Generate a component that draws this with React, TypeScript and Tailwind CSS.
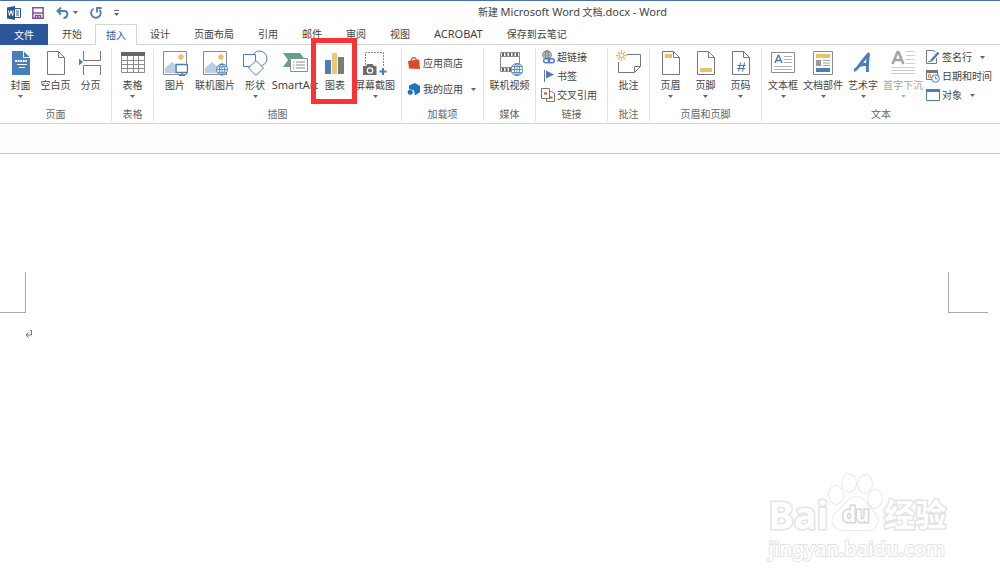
import type { ReactNode } from "react";
import clsx from "clsx";

const BLUE = "#4a7ebb";
const GRAY = "#777";

function Caret({ muted }: { muted?: boolean }) {
  return (
    <svg width="5" height="3" viewBox="0 0 5 3" className="shrink-0">
      <path d="M0 0h5L2.5 3z" fill={muted ? "#b8b8b8" : "#666"} />
    </svg>
  );
}

function Icon({ children }: { children: ReactNode }) {
  return (
    <svg width="26" height="26" viewBox="0 0 26 26" fill="none" stroke={GRAY} className="shrink-0">
      {children}
    </svg>
  );
}

function SmallIcon({ children }: { children: ReactNode }) {
  return (
    <svg width="14" height="14" viewBox="0 0 14 14" fill="none" stroke={GRAY} className="shrink-0">
      {children}
    </svg>
  );
}

function Sheet({ children }: { children?: ReactNode }) {
  return (
    <Icon>
      <path d="M4.500 1.500h11l6 6v17h-17zM15.500 1.500v6h6" fill="#fff" />
      {children}
    </Icon>
  );
}

function Globe({ x, y, r, color = BLUE }: { x: number; y: number; r: number; color?: string }) {
  return (
    <g stroke={color} transform={`translate(${x} ${y})`}>
      <circle r={r} fill="#fff" />
      <ellipse rx={r / 2.2} ry={r} />
      <path d={`M${-r} 0h${r * 2}M0 ${-r}v${r * 2}M${-r * 0.85} ${-r / 2}h${r * 1.7}M${-r * 0.85} ${r / 2}h${r * 1.7}`} strokeWidth="0.8" />
    </g>
  );
}

function Picture({ children }: { children: ReactNode }) {
  return (
    <Icon>
      <path d="M1.500 1.500h23v23h-23z" fill="#fff" stroke="#8a8a8a" />
      <path d="M3 23v-5l7-6 7 6v5z" fill="#b9cfe6" stroke="none" />
      <circle cx="19" cy="7" r="2.7" fill="#edc06c" stroke="none" />
      {children}
    </Icon>
  );
}

const coverIcon = (
  <Icon>
    <path d="M4 1h11v7h7v17H4z" fill={BLUE} stroke="none" />
    <path d="M16 1.500V7h5.500z" fill={BLUE} stroke="none" />
    <path d="M7 11h12" stroke="#fff" strokeWidth="2" strokeDasharray="2 .6" />
    <path d="M9 14.500h10M11 17.500h6" stroke="#fff" />
  </Icon>
);

const breakIcon = (
  <Icon>
    <path d="M5.500 1v9.500h17V1M5.500 25v-9.500h17V25" />
    <path d="M1 8.500l4 3.500-4 3.500z" fill={BLUE} stroke="none" />
  </Icon>
);

const tableIcon = (
  <Icon>
    <path d="M1.500 2.500h23v20h-23zM7.500 6v16M13.500 6v16M18.500 6v16M2 10.500h22M2 14.500h22M2 18.500h22" stroke="#8c8c8c" />
    <path d="M1 2h24v4H1z" fill="#666" stroke="none" />
  </Icon>
);

const pictureIcon = (
  <Picture>
    <path d="M13 13.500h13v9.500H13z" fill="#fff" stroke="none" />
    <path d="M14 14.500h11.500v8H14z" fill="#fff" stroke={BLUE} strokeWidth="1.500" />
    <path d="M17 25.500h6M20 23v2" stroke={BLUE} />
  </Picture>
);

const onlinePictureIcon = (
  <Picture>
    <Globe x={20} y={19.5} r={5.5} />
  </Picture>
);

const shapesIcon = (
  <Icon>
    <circle cx="17.500" cy="8.500" r="7.500" stroke={BLUE} />
    <path d="M1.500 4.500h12v12h-12z" fill="#fff" stroke={BLUE} />
    <path d="M14 10.500l7.500 7.500-7.500 7.500L6.500 18z" fill="#fff" stroke={BLUE} />
  </Icon>
);

const smartArtIcon = (
  <Icon>
    <path d="M1 3h17l5 7-5 7H1l5-7z" fill="#5fa389" stroke="none" />
    <path d="M8.500 8.500h17v13h-17z" fill="#fff" stroke="#8c8c8c" />
    <path d="M11 12h1.500M14 12h9M11 15h1.500M14 15h9M11 18h1.500M14 18h9" stroke="#8c8c8c" />
  </Icon>
);

const chartIcon = (
  <Icon>
    <path d="M3 10h6v14H3z" fill={BLUE} stroke="none" />
    <path d="M10 3h5v21h-5z" fill="#edc679" stroke="none" />
    <path d="M16 7h6v17h-6z" fill="#7a7a7a" stroke="none" />
  </Icon>
);

const screenshotIcon = (
  <Icon>
    <path d="M3.500 15V2.500h18V17" stroke="#8a8a8a" strokeDasharray="2 1" />
    <path d="M1 16h3l1.500-2h5l1.500 2h2.500v9H1z" fill="#6d6d6d" stroke="none" />
    <circle cx="8" cy="20.500" r="2.700" fill="#6d6d6d" stroke="#fff" strokeWidth="1.200" />
    <path d="M21 18v7M17.500 21.500h7" stroke={BLUE} strokeWidth="2" />
  </Icon>
);

const videoIcon = (
  <Icon>
    <path d="M3.500 2.500h19v19h-19zM3.500 6.500h19M3.500 17.500h19" stroke="#8c8c8c" />
    <path d="M5 4.500h17M5 19.500h10" stroke="#666" strokeWidth="3" strokeDasharray="2 1.500" />
    <Globe x={20} y={19.5} r={6} />
  </Icon>
);

const commentIcon = (
  <Icon>
    <path d="M2.500 12v10.500h16l6-6v-12H11M18.500 22.500v-6h6" />
    <path d="M5.500 0v11M0 5.500h11M1.800 1.800l7.400 7.400M9.200 1.800L1.800 9.200" stroke="#edb95a" strokeWidth="1.300" />
    <circle cx="5.500" cy="5.500" r="2.300" fill="#fff" stroke="#edb95a" />
  </Icon>
);

const textBoxIcon = (
  <Icon>
    <path d="M1.500 2.500h23v20h-23z" stroke="#8c8c8c" />
    <path d="M5 13L8.200 5.500h.6L12 13M6 10.500h5" stroke={BLUE} strokeWidth="1.500" />
    <path d="M14 6.500h8M14 9.500h8M14 12.500h8M4 16.500h18M4 19.500h18" stroke="#b0b0b0" />
  </Icon>
);

const quickPartsIcon = (
  <Icon>
    <path d="M3.500 1.500h19v23h-19z" stroke="#8c8c8c" />
    <path d="M6 4h14v4H6z" fill="#edc06c" stroke="none" />
    <path d="M6 10h5v6H6z" fill="#9a9a9a" stroke="none" />
    <path d="M13 10.500h7M13 13h7M13 15.500h7" stroke="#a5a5a5" />
    <path d="M6 18h14v4H6z" fill={BLUE} stroke="none" />
  </Icon>
);

const wordArtIcon = (
  <Icon>
    <path d="M4 20.500C8 19 11 12 18.500 4c-.8 6-1.500 11-1 18M9 15.500c3-.8 6-1.200 9-1.200" stroke={BLUE} strokeWidth="3" strokeLinejoin="round" />
  </Icon>
);

const dropCapIcon = (
  <Icon>
    <path d="M2.500 14L7.500 2h1l5 12M4.500 10h7" stroke="#a3a3a3" strokeWidth="2.500" />
    <path d="M16 1.500h9M16 5.500h9M16 9.500h9M16 13.500h9M1 17.500h24M1 20.500h24M1 23.500h24" stroke="#cfcfcf" />
  </Icon>
);

const storeIcon = (
  <SmallIcon>
    <path d="M1 5l11-1.500 1 9.500-11-.5z" fill="#dc4a1f" stroke="none" />
    <path d="M4 5.500C4 1 8.500 0 9.500 4.500" stroke="#dc4a1f" strokeWidth="1.200" />
  </SmallIcon>
);

const myAppsIcon = (
  <SmallIcon>
    <path d="M2 3.500L8 1l5 3v6l-5 3.500-1-5-5-1.500z" fill="#1e73be" stroke="none" />
    <circle cx="3.200" cy="10.200" r="2.500" fill="#1e73be" stroke="none" />
  </SmallIcon>
);

const linkIcon = (
  <SmallIcon>
    <Globe x={6} y={5} r={4.3} color="#777" />
    <path d="M2 8h12v6H2z" fill="#fff" stroke="none" />
    <rect x="2.700" y="8.700" width="6" height="4" rx="2" stroke={BLUE} strokeWidth="1.400" />
    <rect x="7.300" y="8.700" width="6" height="4" rx="2" stroke={BLUE} strokeWidth="1.400" />
  </SmallIcon>
);

const bookmarkIcon = (
  <SmallIcon>
    <path d="M3.500 1v12" />
    <path d="M5 1.500l8 4-8 4z" fill={BLUE} stroke="none" />
  </SmallIcon>
);

const crossRefIcon = (
  <SmallIcon>
    <path d="M.5.500h8v10h-8z" fill="#fff" />
    <path d="M8.500 3.500h2l3 2v8h-8v-3" />
    <path d="M3 5.500h3M8.500 9.500h3" stroke="#dc4a1f" strokeWidth="2" />
  </SmallIcon>
);

const signatureIcon = (
  <SmallIcon>
    <path d="M9.500 1.500l-3-1h-6v13h10V8" />
    <path d="M5 11l7.500-8.500" stroke={BLUE} strokeWidth="2.500" />
    <path d="M2 11.500h3" stroke="#777" />
  </SmallIcon>
);

const dateIcon = (
  <SmallIcon>
    <path d="M.5 1.500h11v9H.5z" />
    <path d="M0 1h12v3H0z" fill="#777" stroke="none" />
    <path d="M2.500 5.500h2v3h-2z" stroke="#e58a45" />
    <circle cx="9.500" cy="9.500" r="3.800" fill="#fff" stroke={BLUE} />
    <path d="M9.500 7.500v2.200h2" stroke={BLUE} />
  </SmallIcon>
);

const objectIcon = (
  <SmallIcon>
    <path d="M.5 1.500h13v11H.5z" stroke={BLUE} />
    <path d="M0 1h14v3H0z" fill={BLUE} stroke="none" />
  </SmallIcon>
);

type ToolProps = {
  icon: ReactNode;
  label: ReactNode;
  menu?: boolean;
  disabled?: boolean;
  marked?: boolean;
  wide?: boolean;
};

function Tool({ icon, label, menu, disabled, marked, wide }: ToolProps) {
  return (
    <button
      type="button"
      disabled={disabled}
      className={clsx(
        "relative flex flex-col items-center whitespace-nowrap pt-[5px] disabled:text-[#a3a3a3]",
        wide ? "w-10" : "w-[35px]",
      )}
    >
      {icon}
      <span className="mt-[2px] mb-[3px] leading-[14px]">{label}</span>
      {menu && <Caret muted={disabled} />}
      {marked && <span className="absolute -top-[7px] -left-1 z-10 h-[66px] w-[46px] border-5 border-[#fa3434]" />}
    </button>
  );
}

function SmallTool({ icon, label, menu }: ToolProps) {
  return (
    <button type="button" className="flex items-center gap-[2px] whitespace-nowrap leading-[14px]">
      {icon}
      {label}
      {menu && (
        <span className="ml-[6px]">
          <Caret />
        </span>
      )}
    </button>
  );
}

type GroupProps = { title: string; className: string; start?: boolean; last?: boolean; children: ReactNode };

function Group({ title, className, start, last, children }: GroupProps) {
  return (
    <section className={clsx("flex shrink-0 flex-col border-[#e1e1e1]", !last && "border-r", className)}>
      <div className={clsx("flex h-[60px]", start ? "justify-start pl-px" : "justify-center")}>
        {/* tools start above the divider line */}
        <div className="-mt-[3px] flex">{children}</div>
      </div>
      <h2 className="text-center leading-[14px] text-[#666]">{title}</h2>
    </section>
  );
}

const tabs = ["开始", "插入", "设计", "页面布局", "引用", "邮件", "审阅", "视图", "ACROBAT", "保存到云笔记"];

function TitleBar() {
  return (
    <header className="grid h-6 grid-cols-[145px_1fr] items-center border-t border-[#4a72ad]">
      <div className="flex items-center pl-[7px]">
        <svg width="14" height="14" viewBox="0 0 14 14" fill="none" aria-label="Word">
          <path d="M7.500 2.500h6v9h-6M9 5h3M9 7h3M9 9h3" stroke="#2b579a" />
          <path d="M0 1.500L8 0v14l-8-1.500z" fill="#2b579a" />
          <path d="M1.500 4.500l1 5 1.500-5 1.500 5 1-5" stroke="#fff" />
        </svg>
        <button type="button" aria-label="保存" className="ml-[11px]">
          <svg width="12" height="12" viewBox="0 0 12 12" fill="none" stroke="#8551a5" strokeWidth="1.500">
            <path d="M.8.800h10.400v10.400H.8zM1 6h10M3.500 11V8.500h5V11" />
            <path d="M5 10h2" />
          </svg>
        </button>
        <button type="button" aria-label="撤消" className="ml-3 flex items-center gap-1">
          <svg width="13" height="12" viewBox="0 0 13 12" fill="none" stroke={BLUE} strokeWidth="2">
            <path d="M5 .5L1.500 4 5 7.500M2 4h6.500c4 0 4 6.500-1 7" />
          </svg>
          <Caret />
        </button>
        <button type="button" aria-label="重复" className="ml-3">
          <svg width="12" height="12" viewBox="0 0 12 12" fill="none" stroke={BLUE} strokeWidth="1.800">
            <path d="M3.500 1.800A4.800 4.800 0 1 0 9.500 2.800M7 5.500V1h4.500" />
          </svg>
        </button>
        <button type="button" aria-label="自定义快速访问工具栏" className="ml-3">
          <svg width="5" height="6" viewBox="0 0 5 6">
            <path d="M0 0h5v1H0zM0 3h5L2.500 6z" fill="#666" />
          </svg>
        </button>
      </div>
      <h1 className="text-center">
        新建 <span className="text-[11px]">Microsoft Word</span> 文档<span className="text-[11px]">.docx - Word</span>
      </h1>
    </header>
  );
}

export default function App() {
  return (
    <div className="relative min-h-screen overflow-hidden bg-white font-['Noto_Sans','Noto_Sans_CJK_SC',sans-serif] text-[10px] text-[#444]">
      <TitleBar />

      <nav className="flex h-[21px] border-b border-[#d5d5d5] leading-5">
        <button type="button" className="mr-[2px] h-[21px] w-12 bg-[#2b579a] text-white">
          文件
        </button>
        {tabs.map((tab) => (
          <button
            key={tab}
            type="button"
            className={clsx(
              tab === "插入"
                ? "mx-px h-[21px] border-x border-t border-[#d5d5d5] bg-white px-[10px] leading-[19px] text-[#2b579a]"
                : "px-3",
              tab === "ACROBAT" && "text-[11px]",
            )}
          >
            {tab}
          </button>
        ))}
      </nav>

      <main>
        <div className="flex h-[79px] border-b border-[#d5d5d5] pt-[3px] pb-[2px]">
          <Group title="页面" className="w-28">
            <Tool icon={coverIcon} label="封面" menu />
            <Tool icon={<Sheet />} label="空白页" />
            <Tool icon={breakIcon} label="分页" />
          </Group>
          <Group title="表格" className="w-[42px]">
            <Tool icon={tableIcon} label="表格" menu />
          </Group>
          <Group title="插图" className="w-[248px]" start>
            <Tool wide icon={pictureIcon} label="图片" />
            <Tool wide icon={onlinePictureIcon} label="联机图片" />
            <Tool wide icon={shapesIcon} label="形状" menu />
            <Tool wide icon={smartArtIcon} label={<span className="text-[11px]">SmartArt</span>} />
            <Tool wide icon={chartIcon} label="图表" marked />
            <Tool wide icon={screenshotIcon} label="屏幕截图" menu />
          </Group>
          <Group title="加载项" className="w-[82px]" start>
            <div className="flex flex-col gap-3 pt-[11px] pl-1">
              <SmallTool icon={storeIcon} label="应用商店" />
              <SmallTool icon={myAppsIcon} label="我的应用" menu />
            </div>
          </Group>
          <Group title="媒体" className="w-[52px]">
            <Tool wide icon={videoIcon} label="联机视频" />
          </Group>
          <Group title="链接" className="w-[72px]" start>
            <div className="flex flex-col gap-[5px] pt-[5px] pl-1">
              <SmallTool icon={linkIcon} label="超链接" />
              <SmallTool icon={bookmarkIcon} label="书签" />
              <SmallTool icon={crossRefIcon} label="交叉引用" />
            </div>
          </Group>
          <Group title="批注" className="w-[42px]">
            <Tool icon={commentIcon} label="批注" />
          </Group>
          <Group title="页眉和页脚" className="w-28">
            <Tool
              icon={
                <Sheet>
                  <path d="M7 4h7v4H7z" fill="#edc06c" stroke="none" />
                </Sheet>
              }
              label="页眉"
              menu
            />
            <Tool
              icon={
                <Sheet>
                  <path d="M7 18h12v4H7z" fill="#edc06c" stroke="none" />
                </Sheet>
              }
              label="页脚"
              menu
            />
            <Tool
              icon={
                <Sheet>
                  <path d="M12.500 12.500l-2 9M16.500 12.500l-2 9M9.500 15.500h8M9 18.500h8" stroke="#3f76b8" />
                </Sheet>
              }
              label="页码"
              menu
            />
          </Group>
          <Group title="文本" className="flex-1" start last>
            <Tool wide icon={textBoxIcon} label="文本框" menu />
            <Tool wide icon={quickPartsIcon} label="文档部件" menu />
            <Tool wide icon={wordArtIcon} label="艺术字" menu />
            <Tool wide icon={dropCapIcon} label="首字下沉" menu disabled />
            <div className="flex flex-col gap-[5px] pt-[5px] pl-[3px]">
              <SmallTool icon={signatureIcon} label="签名行" menu />
              <SmallTool icon={dateIcon} label="日期和时间" />
              <SmallTool icon={objectIcon} label="对象" menu />
            </div>
          </Group>
        </div>

        <div className="h-[30px] border-b border-[#c6c6c6] bg-[#fdfdfd]" />

        <article className="pt-[118px]">
          <div className="flex justify-between pr-3">
            <div className="h-[41px] w-[26px] border-r border-b border-[#aaa]" />
            <div className="h-[41px] w-10 border-b border-l border-[#aaa]" />
          </div>
          <p className="mt-[17px] ml-[25px]">
            <svg width="8" height="8" viewBox="0 0 8 8" fill="none" stroke="#777">
              <path d="M5 .5h1.500V5H1M3.500 2.500L1 5l2.500 2.500" />
            </svg>
          </p>
        </article>
      </main>

      <aside className="absolute right-[54px] bottom-5 flex flex-col gap-[3px] text-white [paint-order:stroke_fill] [-webkit-text-stroke:3px_#e4e4e4]">
        <div className="flex h-[62px] items-end font-bold">
          <span className="text-[38px] leading-10">Bai</span>
          <div className="relative h-[62px] w-[56px]">
            <svg width="56" height="62" viewBox="0 0 56 62" fill="#fff" stroke="#e2e2e2" strokeWidth="1.500">
              <ellipse cx="8" cy="23" rx="7" ry="9" transform="rotate(-8 8 23)" />
              <ellipse cx="21" cy="11" rx="7" ry="9" />
              <ellipse cx="37" cy="12" rx="7" ry="9" transform="rotate(8 37 12)" />
              <ellipse cx="47" cy="27" rx="7" ry="9" transform="rotate(8 47 27)" />
              <path d="M28 25c-8 0-10 7-16 12-7 6-9 10-7 15 4 9 14 6 23 6s18 3 21-6c2-5 0-9-6-15-5-5-7-12-15-12z" />
            </svg>
            <span className="absolute inset-x-0 bottom-[9px] text-center text-[21px] leading-[22px] [-webkit-text-stroke:3px_#d6d6d6]">
              du
            </span>
          </div>
          <span className="text-[31px] leading-10">经验</span>
        </div>
        <span className="text-[20px] leading-6 font-medium [-webkit-text-stroke:2px_#e4e4e4]">jingyan.baidu.com</span>
      </aside>
    </div>
  );
}
